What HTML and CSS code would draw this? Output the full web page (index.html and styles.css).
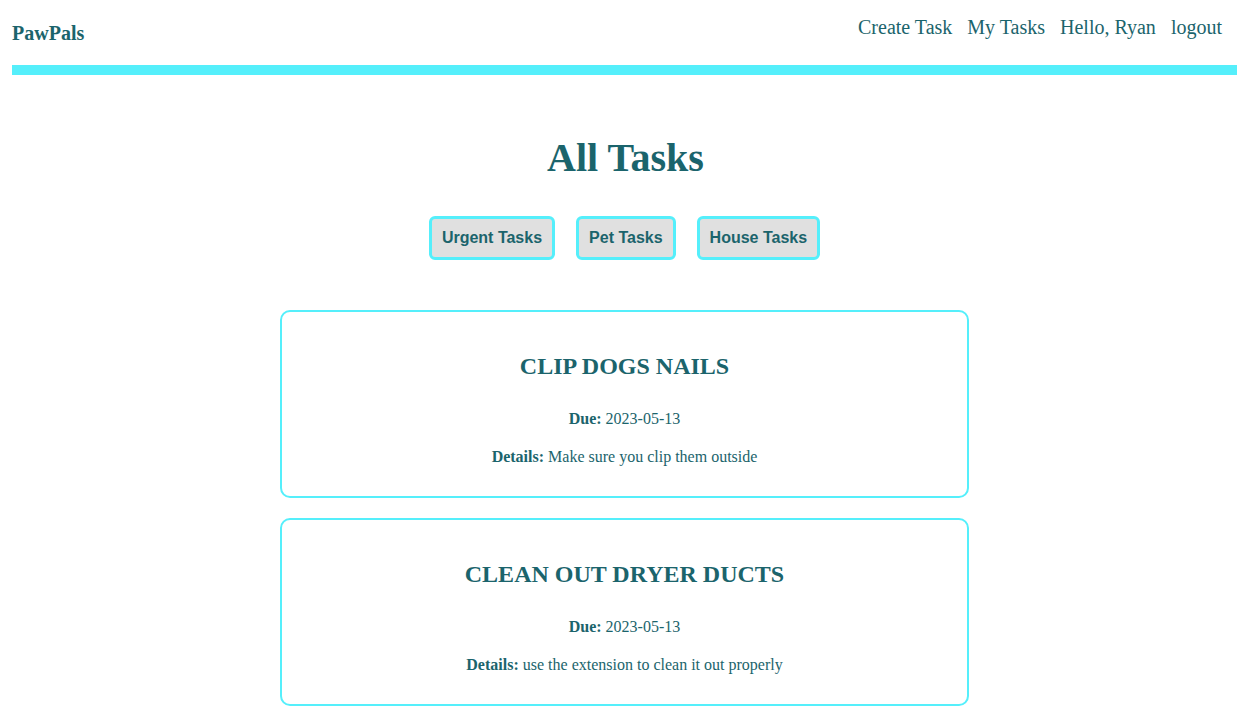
FILE: index.html
```html
<!DOCTYPE html>
<html>
<head>
<meta charset="utf-8">
<link rel="stylesheet" href="styles.css">
</head>
<body>
<header class="header">
  <nav class="nav">
    <div class="brand">PawPals</div>
    <div class="links">
      <a class="link">Create Task</a>
      <a class="link">My Tasks</a>
      <span class="link">Hello, Ryan</span>
      <a class="link">logout</a>
    </div>
  </nav>
  <div class="bar"></div>
</header>
<main class="main">
  <h1 class="title">All Tasks</h1>
  <div class="filters">
    <button class="btn">Urgent Tasks</button>
    <button class="btn">Pet Tasks</button>
    <button class="btn">House Tasks</button>
  </div>
  <div class="cards">
    <div class="card">
      <h2 class="card-title">CLIP DOGS NAILS</h2>
      <p class="card-line"><b>Due:</b> 2023-05-13</p>
      <p class="card-line"><b>Details:</b> Make sure you clip them outside</p>
    </div>
    <div class="card">
      <h2 class="card-title">CLEAN OUT DRYER DUCTS</h2>
      <p class="card-line"><b>Due:</b> 2023-05-13</p>
      <p class="card-line"><b>Details:</b> use the extension to clean it out properly</p>
    </div>
  </div>
</main>
</body>
</html>
```

FILE: styles.css
```css
* { box-sizing: border-box; }
body {
  margin: 0;
  font-family: "Liberation Serif", "Times New Roman", serif;
  color: #1b646c;
  background: #fff;
}
.header { padding: 0 14px 0 12px; }
.nav {
  display: flex;
  justify-content: space-between;
  height: 65px;
}
.brand {
  font-weight: bold;
  font-size: 20px;
  padding-top: 22px;
}
.links {
  display: flex;
  gap: 15px;
  padding-top: 16px;
  padding-right: 15px;
}
.link {
  font-size: 20px;
  color: #1b646c;
  text-decoration: none;
}
.bar {
  height: 10px;
  background: #55effb;
}
.main {
  display: flex;
  flex-direction: column;
  align-items: center;
}
.title {
  font-size: 40px;
  font-weight: bold;
  margin: 60px 0 0;
  line-height: 46px;
}
.filters {
  display: flex;
  gap: 21px;
  margin-top: 35px;
  margin-right: 2px;
}
.btn {
  font-family: "Liberation Sans", Arial, sans-serif;
  font-weight: bold;
  font-size: 16px;
  color: #1b646c;
  background: #e0e0e0;
  border: 3px solid #55effb;
  border-radius: 6px;
  height: 44px;
  padding: 0 10px;
}
.cards {
  margin-top: 50px;
  margin-right: 2px;
  display: flex;
  flex-direction: column;
  gap: 20px;
  width: 689px;
}
.card {
  border: 2px solid #55effb;
  border-radius: 10px;
  height: 188px;
  text-align: center;
  padding-top: 40px;
}
.card-title {
  font-size: 24px;
  font-weight: bold;
  margin: 0 0 30px;
  line-height: 28px;
}
.card-line {
  font-size: 16px;
  margin: 0 0 20px;
  line-height: 18px;
}
```
